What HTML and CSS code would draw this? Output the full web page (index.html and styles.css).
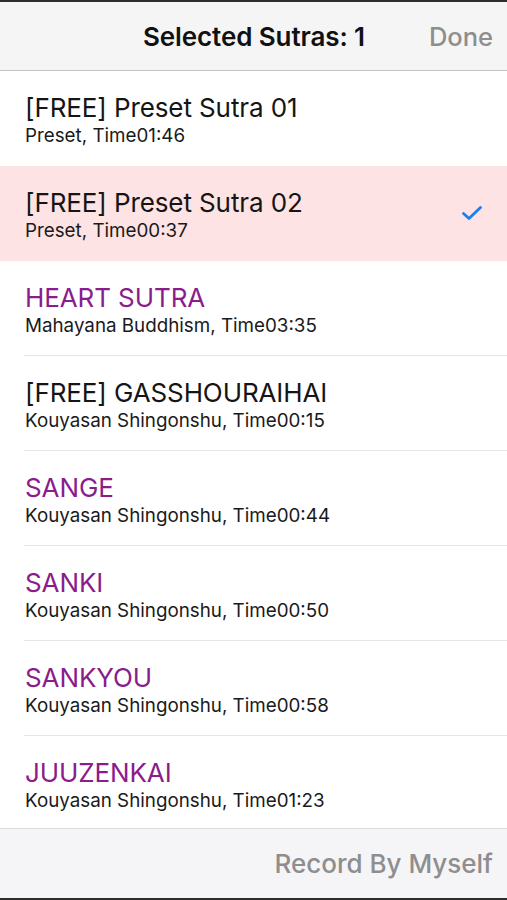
FILE: index.html
```html
<!DOCTYPE html>
<html>
<head>
<meta charset="utf-8">
<link rel="stylesheet" href="styles.css">
</head>
<body>
<div class="app">
  <div class="edge"></div>
  <header class="navbar">
    <div class="nav-title">Selected Sutras: 1</div>
    <div class="nav-done">Done</div>
  </header>
  <ul class="list">
    <li class="row nosep"><div class="title">[FREE] Preset Sutra 01</div><div class="sub">Preset, Time01:46</div></li>
    <li class="row selected nosep"><div class="title">[FREE] Preset Sutra 02</div><div class="sub">Preset, Time00:37</div>
      <svg class="check" width="22" height="18" viewBox="0 0 22 18"><path d="M2.5 9.5 L8 14.5 L19.5 3.5" fill="none" stroke="#1a7ef5" stroke-width="2.8" stroke-linecap="round" stroke-linejoin="round"/></svg>
    </li>
    <li class="row"><div class="title paid">HEART SUTRA</div><div class="sub">Mahayana Buddhism, Time03:35</div></li>
    <li class="row"><div class="title">[FREE] GASSHOURAIHAI</div><div class="sub">Kouyasan Shingonshu, Time00:15</div></li>
    <li class="row"><div class="title paid">SANGE</div><div class="sub">Kouyasan Shingonshu, Time00:44</div></li>
    <li class="row"><div class="title paid">SANKI</div><div class="sub">Kouyasan Shingonshu, Time00:50</div></li>
    <li class="row"><div class="title paid">SANKYOU</div><div class="sub">Kouyasan Shingonshu, Time00:58</div></li>
    <li class="row"><div class="title paid">JUUZENKAI</div><div class="sub">Kouyasan Shingonshu, Time01:23</div></li>
  </ul>
  <footer class="toolbar">
    <div class="tool-btn">Record By Myself</div>
  </footer>
  <div class="edge"></div>
</div>
</body>
</html>
```

FILE: styles.css
```css
* { box-sizing: border-box; }
html, body { margin: 0; padding: 0; }
body {
  font-family: Inter, Roboto, "Liberation Sans", sans-serif;
  background: #fff;
  color: #111;
}
.app {
  width: 507px;
  height: 900px;
  display: flex;
  flex-direction: column;
  overflow: hidden;
}
.edge {
  height: 2px;
  background: #2e2e2e;
  flex: none;
}
.navbar {
  flex: none;
  height: 69px;
  background: #f5f5f5;
  border-bottom: 1px solid #c4c4c4;
  display: flex;
  align-items: center;
  justify-content: center;
  position: relative;
}
.nav-title {
  font-size: 26px;
  font-weight: 600;
  color: #111;
  letter-spacing: -0.1px;
  margin-left: 1px;
}
.nav-done {
  position: absolute;
  right: 14px;
  top: 50%;
  transform: translateY(-50%);
  font-size: 25.5px;
  font-weight: 500;
  color: #8e8e8e;
}
.list {
  flex: 1;
  list-style: none;
  margin: 0;
  padding: 0;
  overflow: hidden;
}
.row {
  height: 95px;
  padding: 21px 0 0 25px;
  position: relative;
  border-bottom: 1px solid transparent;
}
.row::after {
  content: "";
  position: absolute;
  left: 24px;
  right: 0;
  bottom: -1px;
  height: 1px;
  background: #e6e6e6;
}
.row.nosep::after { display: none; }
.row.selected { background: #fde3e3; }
.title {
  font-size: 26px;
  line-height: 31px;
  color: #151515;
  letter-spacing: -0.1px;
}
.title.paid { color: #8b1c8c; }
.sub {
  font-size: 18.8px;
  line-height: 25px;
  color: #1a1a1a;
}
.check {
  position: absolute;
  right: 24px;
  top: 38px;
}
.toolbar {
  flex: none;
  height: 70px;
  background: #f5f4f6;
  border-top: 1px solid #dcdcdc;
  display: flex;
  align-items: center;
  justify-content: flex-end;
  padding-right: 14px;
}
.tool-btn {
  font-size: 26px;
  font-weight: 500;
  color: #8e8e8e;
}
```
